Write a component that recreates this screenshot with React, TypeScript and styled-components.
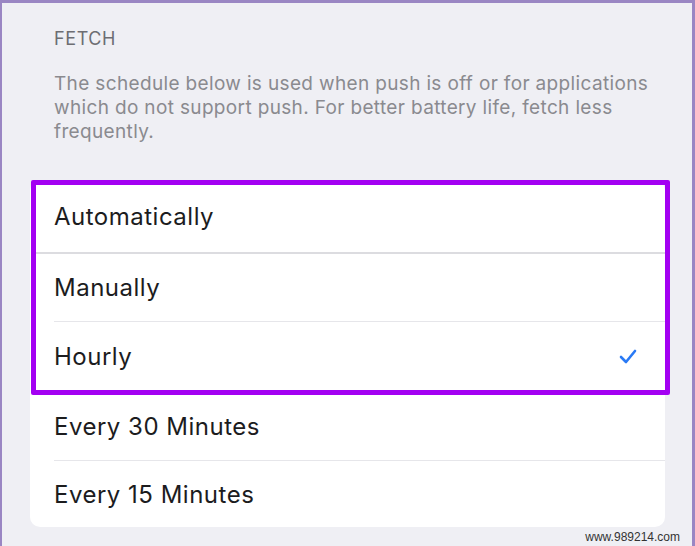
import React from "react";
import styled, { createGlobalStyle } from "styled-components";

const GlobalStyle = createGlobalStyle`
  html, body { margin: 0; padding: 0; background: #efeff4; }
  * { box-sizing: border-box; }
`;

const Frame = styled.div`
  width: 695px;
  height: 546px;
  background: #efeff4;
  border-left: 2px solid #9a86c3;
  border-top: 3px solid #9a86c3;
  border-right: 3px solid #9a86c3;
  font-family: Inter, Roboto, "Liberation Sans", sans-serif;
  display: flex;
  flex-direction: column;
  overflow: hidden;
`;

const SectionTitle = styled.div`
  margin: 25px 0 0 52px;
  font-size: 18px;
  line-height: 21px;
  color: #6d6d72;
  letter-spacing: 0.6px;
`;

const Description = styled.p`
  margin: 23px 30px 0 52px;
  font-size: 19px;
  line-height: 24px;
  color: #8a8a8f;
  letter-spacing: 0.35px;
`;

const Card = styled.div`
  margin: 36px 0 0 28px;
  width: 635px;
  background: #ffffff;
  border-radius: 10px;
  display: flex;
  flex-direction: column;
`;

const Highlight = styled.div`
  position: relative;
  display: flex;
  flex-direction: column;
  &::after {
    content: "";
    position: absolute;
    left: 1px;
    right: -5px;
    top: 0;
    bottom: -4px;
    border: 5px solid #a300f2;
    border-radius: 2px;
    pointer-events: none;
  }
`;

const Row = styled.div<{ $h: number }>`
  height: ${(p) => p.$h}px;
  display: flex;
  align-items: center;
  justify-content: space-between;
  padding: 0 28px 0 24px;
  font-size: 24px;
  letter-spacing: 0.5px;
  color: #1c1c1e;
`;

const Separator = styled.div<{ $full?: boolean }>`
  height: ${(p) => (p.$full ? 2 : 1)}px;
  margin-left: ${(p) => (p.$full ? 6 : 24)}px;
  background: ${(p) => (p.$full ? "#dcdce0" : "#e6e6ea")};
`;

const Footer = styled.div`
  display: flex;
  justify-content: flex-end;
  padding: 3px 12px 0 0;
  font-family: "Liberation Sans", Arial, sans-serif;
  font-size: 12px;
  color: #333;
`;

const Check = () => (
  <svg width="18" height="15" viewBox="0 0 18 15">
    <polyline
      points="2,8 7,13 16,2"
      fill="none"
      stroke="#2a7af5"
      strokeWidth="2.6"
      strokeLinecap="round"
      strokeLinejoin="round"
    />
  </svg>
);

export default function App() {
  return (
    <>
      <GlobalStyle />
      <Frame>
        <SectionTitle>FETCH</SectionTitle>
        <Description>
          The schedule below is used when push is off or for applications which do not support push. For better battery
          life, fetch less frequently.
        </Description>
        <Card>
          <Highlight>
            <Row $h={72}>Automatically</Row>
            <Separator $full />
            <Row $h={67}>Manually</Row>
            <Separator />
            <Row $h={69}>
              Hourly
              <Check />
            </Row>
          </Highlight>
          <Separator />
          <Row $h={68}>Every 30 Minutes</Row>
          <Separator />
          <Row $h={66}>Every 15 Minutes</Row>
        </Card>
        <Footer>www.989214.com</Footer>
      </Frame>
    </>
  );
}
